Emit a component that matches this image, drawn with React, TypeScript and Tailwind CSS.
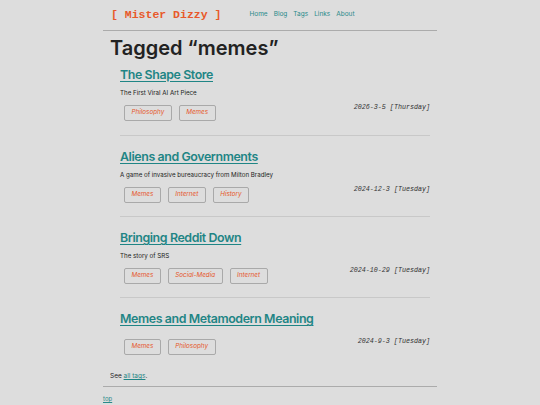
const posts = [
  {
    title: "The Shape Store",
    desc: "The First Viral AI Art Piece",
    tags: ["Philosophy", "Memes"],
    date: "2026-3-5 [Thursday]",
  },
  {
    title: "Aliens and Governments",
    desc: "A game of invasive bureaucracy from Milton Bradley",
    tags: ["Memes", "Internet", "History"],
    date: "2024-12-3 [Tuesday]",
  },
  {
    title: "Bringing Reddit Down",
    desc: "The story of SRS",
    tags: ["Memes", "Social-Media", "Internet"],
    date: "2024-10-29 [Tuesday]",
  },
  {
    title: "Memes and Metamodern Meaning",
    desc: "",
    tags: ["Memes", "Philosophy"],
    date: "2024-9-3 [Tuesday]",
  },
];

export default function App() {
  return (
    <div className="min-h-[405px] bg-[#dddddd] font-['Inter','Liberation_Sans',sans-serif] text-[#222]">
      <div className="mx-auto w-[334px]">
        {/* header */}
        <header className="flex h-[31px] items-center border-b border-[#ababab] pl-[8px]">
          <a className="font-['Liberation_Mono',monospace] text-[11.5px] font-bold text-[#e8592a]">[ Mister Dizzy ]</a>
          <nav className="ml-[28px] flex gap-[6px] text-[6.5px] text-[#2a8a8a]">
            {["Home", "Blog", "Tags", "Links", "About"].map((n) => (
              <a key={n}>{n}</a>
            ))}
          </nav>
        </header>

        <main className="pl-[7px]">
          <h1 className="mt-[5px] text-[20px] font-semibold leading-[24px]">Tagged “memes”</h1>

          <ul className="ml-[10px] w-[310px]">
            {posts.map((p, i) => (
              <li
                key={p.title}
                className={`${i === 0 ? "pt-[6px] pb-[14px]" : "pt-[12px] pb-[13px]"} ${
                  i < posts.length - 1 ? "border-b border-[#c8c8c8]" : "!pb-0"
                }`}
              >
                <a className="block text-[12.4px] font-semibold leading-[18px] tracking-[-0.4px] text-[#1f8585] underline decoration-1 underline-offset-[2px]">
                  {p.title}
                </a>
                {p.desc && <p className="mt-[4px] text-[6.2px] leading-[10px]">{p.desc}</p>}
                <div className={`flex justify-between ${p.desc ? "mt-[7px]" : "mt-[11px]"}`}>
                  <div className="flex gap-[7px] pl-[4px]">
                    {p.tags.map((t) => (
                      <span
                        key={t}
                        className="flex h-[16px] items-center rounded-[2px] border border-[#a9a9a9] px-[6.5px] text-[6.3px] italic text-[#e5572a]"
                      >
                        {t}
                      </span>
                    ))}
                  </div>
                  <span className="-mt-[2px] font-['Liberation_Mono',monospace] text-[6.7px] italic leading-[8px] text-[#333]">
                    {p.date}
                  </span>
                </div>
              </li>
            ))}
          </ul>

          <p className="mt-[16px] text-[6.5px] leading-[10px]">
            See <a className="text-[#1f8585] underline">all tags</a>.
          </p>
        </main>

        <footer className="mt-[5px] border-t border-[#ababab] pt-[8px] text-[6px] leading-[8px]">
          <a className="text-[#2a8a8a] underline">top</a>
        </footer>
      </div>
    </div>
  );
}
